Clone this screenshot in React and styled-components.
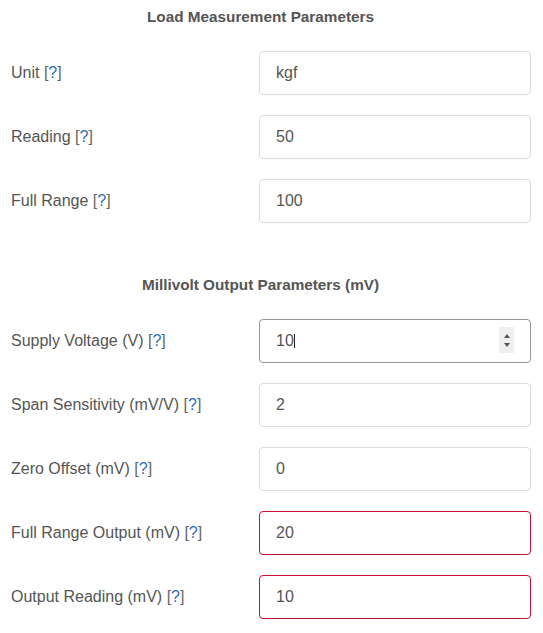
import React from "react";
import styled, { createGlobalStyle } from "styled-components";

const Global = createGlobalStyle`
  html, body { margin: 0; padding: 0; background: #fff; }
  body { font-family: "Liberation Sans", Arial, sans-serif; color: #555; }
  * { box-sizing: border-box; }
`;

const Page = styled.div`
  width: 543px;
  padding: 8px 12px 0 11px;
`;

const Section = styled.section`
  display: flex;
  flex-direction: column;
  gap: 20px;
  & + & { margin-top: 53px; }
`;

const Heading = styled.h3`
  margin: 0 0 5px 0;
  padding-right: 21px;
  text-align: center;
  font-size: 15.3px;
  line-height: 18px;
  font-weight: bold;
  color: #555;
`;

const Row = styled.div`
  display: grid;
  grid-template-columns: 248px 272px;
  align-items: center;
`;

const Label = styled.label`
  font-size: 16px;
  color: #555;
`;

const Help = styled.span`
  color: #666;
  & b { font-weight: normal; color: #2a6ebb; }
`;

const InputWrap = styled.div`
  position: relative;
`;

const Input = styled.input`
  display: block;
  height: 44px;
  width: 100%;
  padding: 0 16px;
  font-family: "Liberation Sans", Arial, sans-serif;
  font-size: 16px;
  color: #555;
  background: #fff;
  border: 1px solid ${(p) => (p.$invalid ? "#c8102e" : p.$active ? "#949494" : "#dcdcdc")};
  border-radius: 4px;
  outline: none;
  &:focus { outline: none; }
`;

const Caret = styled.span`
  position: absolute;
  left: 35px;
  top: 15px;
  width: 1px;
  height: 14px;
  background: #222;
`;

const Spinner = styled.div`
  position: absolute;
  right: 17px;
  top: 8px;
  width: 15px;
  height: 26px;
  background: #efefef;
  display: flex;
  flex-direction: column;
  align-items: center;
  justify-content: center;
  gap: 5px;
`;

const Tri = styled.span`
  width: 0;
  height: 0;
  border-left: 3.5px solid transparent;
  border-right: 3.5px solid transparent;
  ${(p) => (p.$down ? "border-top: 4px solid #555;" : "border-bottom: 4px solid #555;")}
`;

const Field = ({ label, value, invalid, active }) => (
  <Row>
    <Label>
      {label} <Help>[<b>?</b>]</Help>
    </Label>
    <InputWrap>
      <Input type="text" defaultValue={value} $invalid={invalid} $active={active} />
      {active && (
        <>
          <Caret />
          <Spinner>
            <Tri />
            <Tri $down />
          </Spinner>
        </>
      )}
    </InputWrap>
  </Row>
);

export default function App() {
  return (
    <>
      <Global />
      <Page>
        <Section>
          <Heading>Load Measurement Parameters</Heading>
          <Field label="Unit" value="kgf" />
          <Field label="Reading" value="50" />
          <Field label="Full Range" value="100" />
        </Section>
        <Section>
          <Heading>Millivolt Output Parameters (mV)</Heading>
          <Field label="Supply Voltage (V)" value="10" active />
          <Field label="Span Sensitivity (mV/V)" value="2" />
          <Field label="Zero Offset (mV)" value="0" />
          <Field label="Full Range Output (mV)" value="20" invalid />
          <Field label="Output Reading (mV)" value="10" invalid />
        </Section>
      </Page>
    </>
  );
}
